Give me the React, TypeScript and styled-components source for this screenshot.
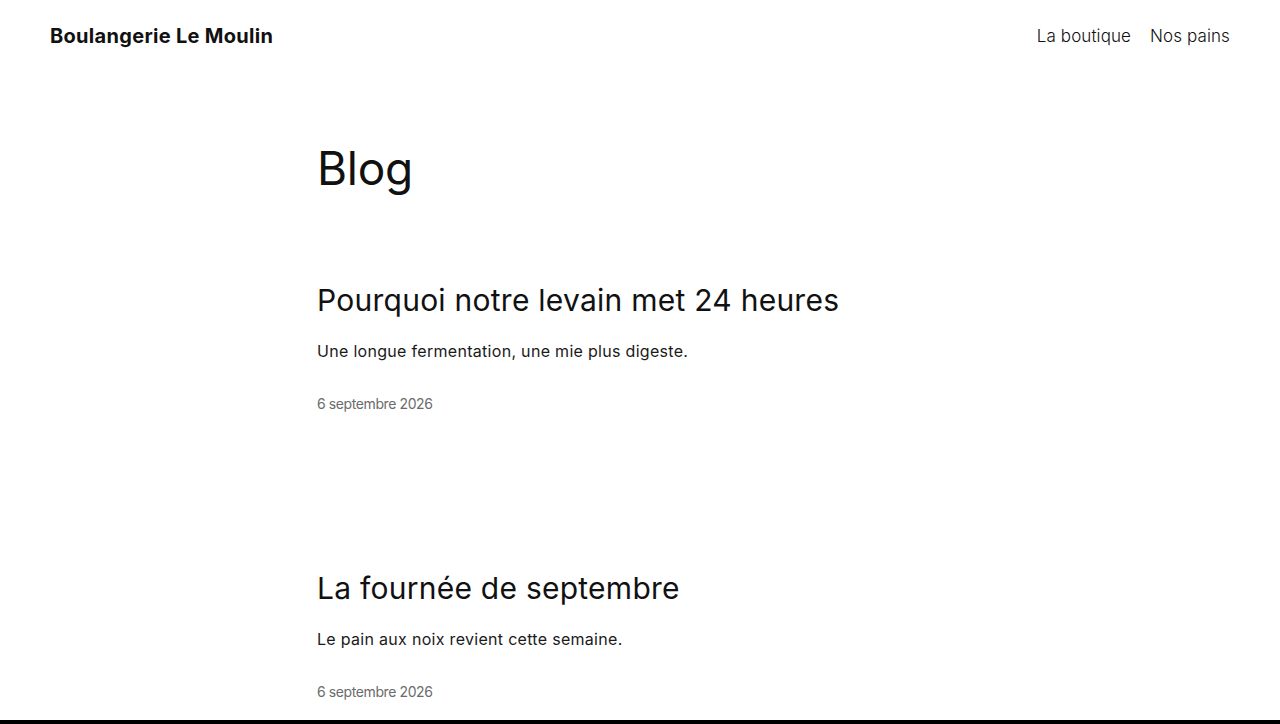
import styled, { createGlobalStyle } from 'styled-components'

const GlobalStyle = createGlobalStyle`
    * { box-sizing: border-box; }
    body {
        margin: 0;
        background: #fff;
        color: #111;
        font-family: Inter, "Noto Sans", sans-serif;
    }
`

const Header = styled.header`
    height: 72px;
    padding: 0 50px;
    display: flex;
    justify-content: space-between;
    align-items: center;
`

const Logo = styled.a`
    font-size: 20px;
    font-weight: 700;
    letter-spacing: 0.3px;
    color: #111;
    text-decoration: none;
`

const Nav = styled.nav`
    display: flex;
    gap: 19px;
`

const NavLink = styled.a`
    font-size: 17px;
    font-weight: 300;
    letter-spacing: 0.1px;
    color: #111;
    text-decoration: none;
`

const Main = styled.main`
    width: 646px;
    margin: 0 auto;
    padding: 64px 0 17px;
`

const PageTitle = styled.h1`
    margin: 0 0 80px;
    font-size: 46px;
    font-weight: 400;
    line-height: 64px;
    letter-spacing: -0.3px;
`

const Posts = styled.div`
    display: flex;
    flex-direction: column;
    gap: 153px;
`

const Post = styled.article`
    display: flex;
    flex-direction: column;
`

const PostTitle = styled.h2`
    margin: 0 0 17px;
    font-size: 30px;
    font-weight: 400;
    line-height: 41px;
    letter-spacing: 0.25px;
`

const Excerpt = styled.p`
    margin: 0 0 28px;
    font-size: 16px;
    font-weight: 400;
    line-height: 27px;
    letter-spacing: 0.3px;
    color: #1a1a1a;
`

const PostDate = styled.time`
    font-size: 14px;
    line-height: 22px;
    color: #6b6b6b;
    letter-spacing: -0.4px;
`

const Footer = styled.footer`
    height: 40px;
    background: #000;
`

const posts = [
    {
        title: 'Pourquoi notre levain met 24 heures',
        excerpt: 'Une longue fermentation, une mie plus digeste.',
        date: '6 septembre 2026',
    },
    {
        title: 'La fournée de septembre',
        excerpt: 'Le pain aux noix revient cette semaine.',
        date: '6 septembre 2026',
    },
]

export default function App() {
    return <>
        <GlobalStyle />
        <Header>
            <Logo href="#">Boulangerie Le Moulin</Logo>
            <Nav>
                <NavLink href="#">La boutique</NavLink>
                <NavLink href="#">Nos pains</NavLink>
            </Nav>
        </Header>
        <Main>
            <PageTitle>Blog</PageTitle>
            <Posts>
                {posts.map((post, index) => (
                    <Post key={index}>
                        <PostTitle>{post.title}</PostTitle>
                        <Excerpt>{post.excerpt}</Excerpt>
                        <PostDate>{post.date}</PostDate>
                    </Post>
                ))}
            </Posts>
        </Main>
        <Footer />
    </>
}
